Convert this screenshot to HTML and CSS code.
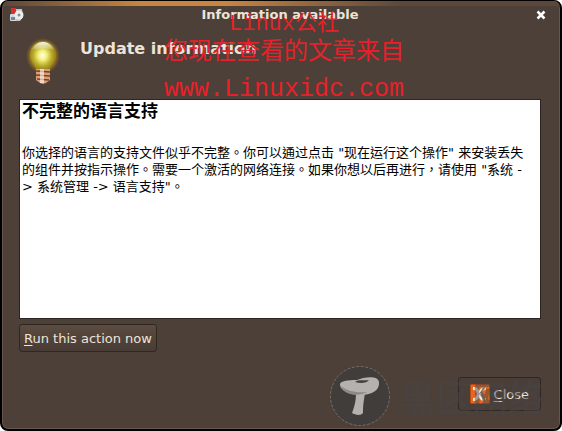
FILE: index.html
```html
<!DOCTYPE html>
<html lang="zh">

<head>
    <meta charset="UTF-8">
    <meta name="viewport" content="width=device-width, initial-scale=1.0">
    <title>Information available</title>
    <link rel="stylesheet" href="styles.css">
</head>

<body>
    <div class="window">
        <header class="titlebar">
            <svg class="app-icon" width="16" height="16" viewBox="0 0 16 16" aria-hidden="true">
                <path d="M6 2h8l1 8-3 4H6z" fill="#c4c4c2" />
                <path d="M3 1h5v8H3z" fill="#d8302c" />
                <rect x="2" y="7" width="6" height="7" rx="1" fill="#d5d8dc" />
                <rect x="3" y="10" width="4" height="3" fill="#7d858c" />
                <circle cx="11" cy="8" r="4.500" fill="#eceeef" />
                <circle cx="11" cy="8" r="1.500" fill="#8d8d8d" />
            </svg>
            <h1>Information available</h1>
            <button class="win-close" type="button" aria-label="Close window">
                <svg width="10" height="10" viewBox="0 0 10 10">
                    <path d="M1.500 1.500l7 7M8.500 1.500l-7 7" stroke="#fff" stroke-width="2.500" />
                </svg>
            </button>
        </header>
        <main class="content">
            <div class="heading">
                <svg class="bulb" width="48" height="52" viewBox="0 0 48 52" aria-hidden="true">
                    <defs>
                        <radialGradient id="halo">
                            <stop offset=".75" stop-color="#9a6f22" />
                            <stop offset="1" stop-color="#8a6420" stop-opacity="0" />
                        </radialGradient>
                        <radialGradient id="glass" cx=".48" cy=".5" r=".55">
                            <stop offset="0" stop-color="#fffff0" />
                            <stop offset=".3" stop-color="#f3f07c" />
                            <stop offset=".65" stop-color="#b9ac2a" />
                            <stop offset="1" stop-color="#8c7716" />
                        </radialGradient>
                        <linearGradient id="shine" x2="0" y2="1">
                            <stop offset="0" stop-color="#fff" stop-opacity=".95" />
                            <stop offset="1" stop-color="#fff" stop-opacity=".1" />
                        </linearGradient>
                    </defs>
                    <ellipse cx="24" cy="19" rx="17" ry="18" fill="url(#halo)" />
                    <path d="M24 4c-8 0-13 6-13 14 0 7 5 9 6 15h14c1-6 6-8 6-15 0-8-5-14-13-14z" fill="url(#glass)" />
                    <path d="M24 5c-5 0-9 3-11 8 6-2 16-2 22 0-2-5-6-8-11-8z" fill="url(#shine)" />
                    <path d="M17 32h14v11l-4 3-3 1-3-1-4-3z" fill="#d9a078" />
                    <path d="M17 34l14 1M17 38l14 1M18 42l12 1" stroke="#7e3d1f" stroke-width="1.500" />
                    <path d="M21 32h4v14h-4z" fill="#fff" fill-opacity=".6" />
                </svg>
                <h2>Update information</h2>
            </div>
            <section class="message" lang="zh-TW">
                <h3>不完整的语言支持</h3>
                <p>你选择的语言的支持文件似乎不完整。你可以通过点击 "现在运行这个操作" 来安装丢失的组件并按指示操作。需要一个激活的网络连接。如果你想以后再进行，请使用 "系统 -&gt; 系统管理 -&gt; 语言支持"。</p>
            </section>
            <button class="btn run" type="button"><span><u>R</u>un this action now</span></button>
            <footer class="actions">
                <button class="btn close" type="button">
                    <svg width="20" height="20" viewBox="0 0 20 20" aria-hidden="true">
                        <rect x=".5" y=".5" width="19" height="19" rx="1" fill="#e8661f" stroke="#b84a12" />
                        <path d="M3 3c4 0 5 1 6 4 1-2 3-4 7-4v3c-3 0-4 2-5 4 1 3 2 4 5 4v3c-4 0-6-1-7-4-1 2-2 4-6 4v-3c3 0 3-2 4-4-1-3-1-4-4-4z" fill="#f5eee6" />
                        <path d="M13 3h3l-4 6h-2zM11 11l2-1 3 7h-3z" fill="#8b7a6c" />
                    </svg>
                    <span><u>C</u>lose</span>
                </button>
            </footer>
        </main>
        <div class="stamp">
            <p>Linux公社</p>
            <p class="line">您现在查看的文章来自</p>
            <p class="site">www.Linuxidc.com</p>
        </div>
        <div class="mark">
            <svg width="60" height="60" viewBox="0 0 60 60" aria-hidden="true">
                <circle cx="30" cy="30" r="29.500" fill="#413d3a" stroke="#8a817b" stroke-width=".7" stroke-dasharray="3 1.500" />
                <path d="M26 27h9c-1 7-2 11-2 20-2 3-8 2-11 0 3-8 4-13 4-20z" fill="#b5b1ae" />
                <path d="M10 19c-1-4 8-5 17-5 7-3 21-5 22 2 1 8-7 13-18 13-12 0-20-4-21-10z" fill="#b5b1ae" />
                <path d="M25 16c4-3 9-1 14-2-2 3-8 4-14 2z" fill="#45403d" />
                <path d="M11 20c6 5 14 7 26 6-9 5-23 3-26-6z" fill="#8d8986" />
            </svg>
            <span>黑区网络</span>
        </div>
    </div>
</body>

</html>
```

FILE: styles.css
```css
* {
    margin: 0;
    padding: 0;
    box-sizing: border-box;
}

body {
    background-color: #fff;
    color: #ede3d8;
    font: 13px/17px "DejaVu Sans", "Noto Sans CJK TC", sans-serif;
}

.window {
    position: relative;
    display: flex;
    flex-direction: column;
    min-height: 100vh;
    border: 2px solid #000;
    border-top-width: 1px;
    border-radius: 8px;
    background-color: #4c4038;
    box-shadow: inset 0 0 0 1px #6b5448;
    overflow: hidden;
}

.titlebar {
    display: flex;
    align-items: center;
    height: 26px;
    padding: 0 14px 4px 6px;
    border-top: 5px solid;
    border-image: linear-gradient(90deg, #59473b, #c9853f 25%, #c9853f 40%, #a5713f 50%, #5b473c 72%) 1;
}

.titlebar h1 {
    flex: 1;
    font-size: 13px;
    text-align: center;
}

.win-close {
    display: flex;
    border: 0;
    background: none;
}

.content {
    flex: 1;
    display: flex;
    flex-direction: column;
    padding: 10px 19px 18px 17px;
}

.heading {
    display: flex;
    gap: 13px;
    height: 62px;
}

.heading h2 {
    font-size: 16px;
    line-height: 24px;
}

.message {
    min-height: 220px;
    padding: 1px 12px 0 2px;
    border: 1px solid #2c2521;
    background-color: #fff;
    color: #000;
}

.message h3 {
    margin-bottom: 23px;
    font-size: 17px;
    line-height: 20px;
}

.btn {
    display: flex;
    align-items: center;
    justify-content: center;
    border: 1px solid #302721;
    border-radius: 3px;
    background: linear-gradient(#5c4b40, #473c35);
    color: #ede3d8;
    font: inherit;
}

.btn u {
    text-underline-offset: 2px;
}

.run {
    align-self: flex-start;
    height: 28px;
    margin-top: 5px;
    padding: 0 4px;
}

.actions {
    display: flex;
    justify-content: flex-end;
    margin-top: auto;
}

.close {
    gap: 4px;
    height: 34px;
    padding: 0 11px;
    background: #4a3f38;
}

/* 水印 */
.stamp,
.mark {
    position: absolute;
    pointer-events: none;
}

.stamp {
    top: 10px;
    left: 6px;
    right: 0;
    color: #e8202a;
    font: 22px/28px "Liberation Mono", "Noto Sans CJK SC", monospace;
    text-align: center;
}

.stamp .line {
    font-size: 24px;
}

.stamp .site {
    font-size: 25px;
    line-height: 46px;
}

.mark {
    display: flex;
    align-items: center;
    gap: 10px;
    left: 328px;
    bottom: 3px;
    color: rgba(70, 68, 70, .5);
    font: bold 36px/48px "Noto Sans CJK SC", sans-serif;
}
```
